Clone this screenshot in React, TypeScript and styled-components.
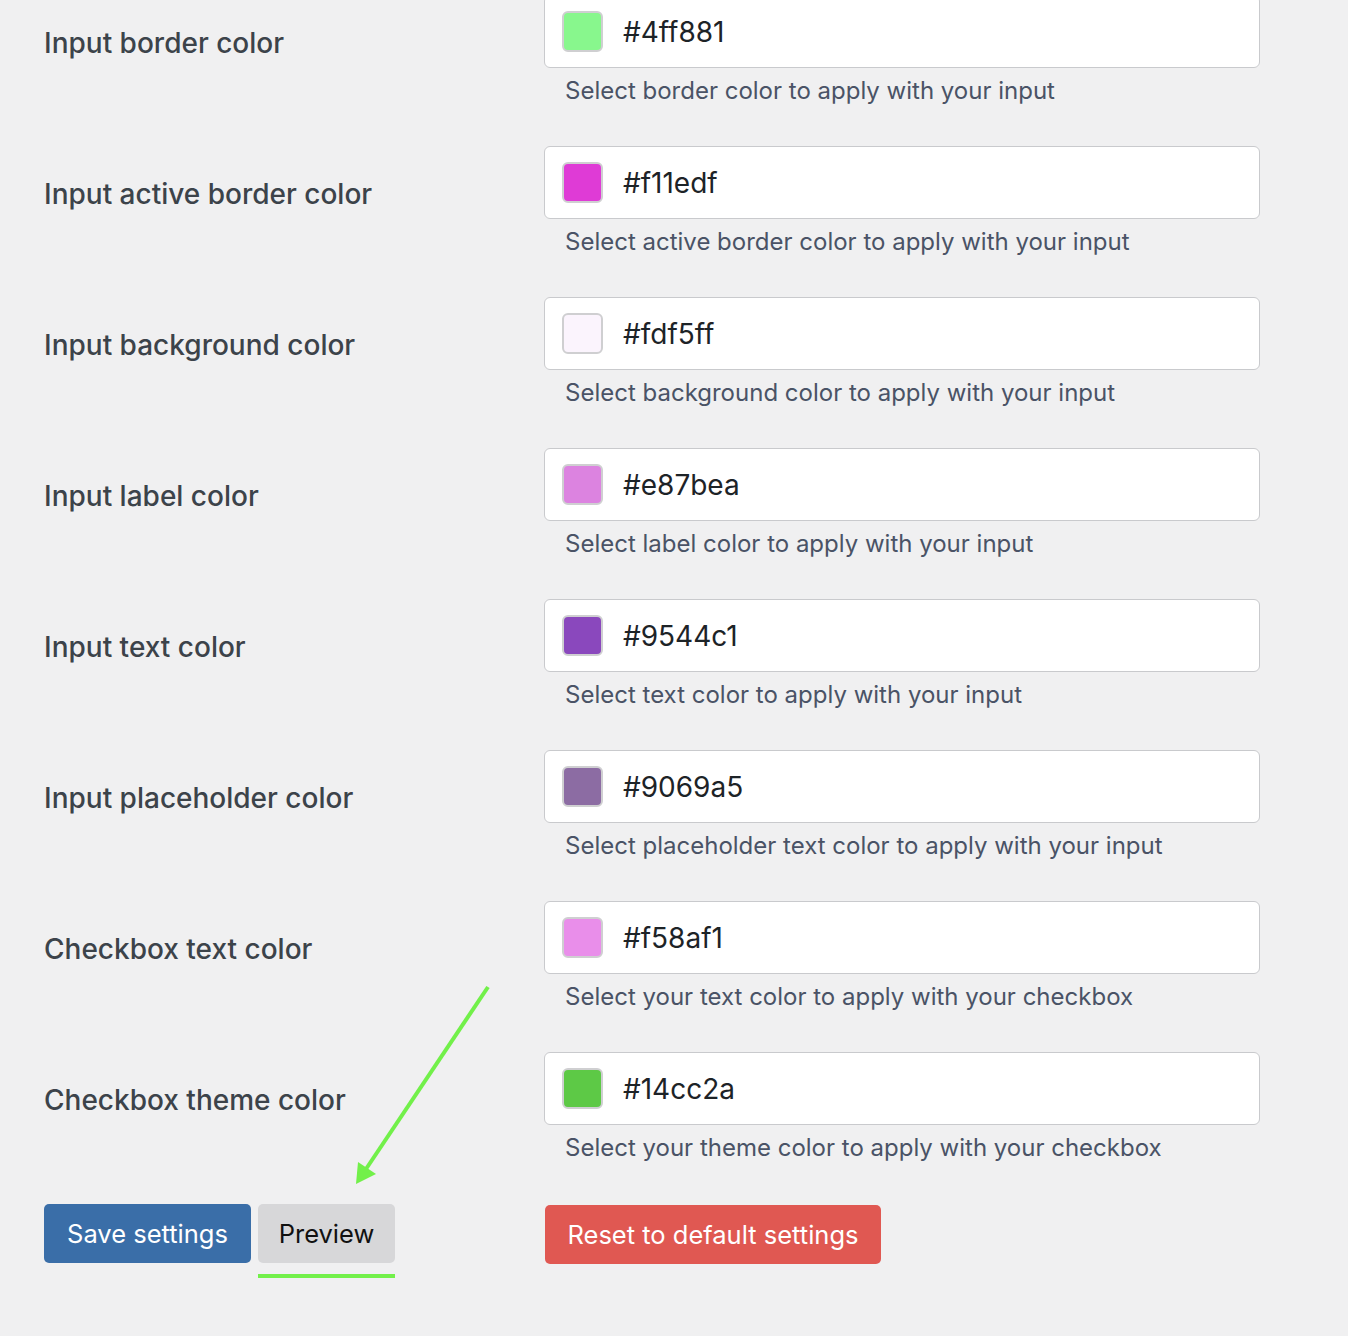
import React from "react";
import styled, { createGlobalStyle } from "styled-components";

const Global = createGlobalStyle`
  html, body { margin: 0; padding: 0; background: #f0f0f1; }
  body { font-family: Inter, "Noto Sans", "Liberation Sans", sans-serif; overflow: hidden; }
`;

const Page = styled.div`
  position: relative;
  padding: 0 0 0 44px;
  margin-top: -5px;
  width: 1304px;
  height: 1341px;
`;

const Rows = styled.div`
  display: flex;
  flex-direction: column;
  gap: 40px;
`;

const Row = styled.div`
  display: grid;
  grid-template-columns: 500px 716px;
`;

const Label = styled.div`
  padding-top: 30px;
  font-size: 28px;
  line-height: 36px;
  font-weight: 500;
  color: #3c434a;
`;

const Field = styled.div`
  display: flex;
  flex-direction: column;
`;

const ColorBox = styled.div`
  box-sizing: border-box;
  height: 73px;
  background: #fff;
  border: 1px solid #c9cacd;
  border-radius: 6px;
  display: flex;
  align-items: center;
  padding-left: 17px;
  gap: 20px;
`;

const Swatch = styled.span<{ $color: string }>`
  box-sizing: border-box;
  width: 41px;
  height: 41px;
  border-radius: 6px;
  border: 2px solid #cfcfd1;
  background: ${(p) => p.$color};
`;

const Hex = styled.span`
  font-size: 28px;
  color: #1d2327;
  line-height: 36px;
`;

const Description = styled.div`
  margin-top: 8px;
  padding-left: 21px;
  font-size: 24px;
  line-height: 30px;
  color: #4a5366;
`;

const Actions = styled.div`
  display: grid;
  grid-template-columns: 500px auto;
  margin-top: 41px;
`;

const Left = styled.div`
  display: flex;
  gap: 7px;
  align-items: flex-start;
`;

type Variant = "primary" | "secondary" | "danger";

const widths: Record<Variant, number> = { primary: 207, secondary: 137, danger: 336 };
const bgs: Record<Variant, string> = { primary: "#3a6ea8", secondary: "#d7d7d9", danger: "#e05852" };

const Button = styled.button<{ $variant: Variant }>`
  box-sizing: border-box;
  width: ${(p) => widths[p.$variant]}px;
  height: 59px;
  border: none;
  border-radius: 5px;
  padding: 0;
  text-align: center;
  white-space: nowrap;
  font-family: Inter, "Noto Sans", "Liberation Sans", sans-serif;
  font-size: 25.5px;
  font-weight: 400;
  cursor: pointer;
  background: ${(p) => bgs[p.$variant]};
  color: ${(p) => (p.$variant === "secondary" ? "#111" : "#fff")};
`;

const PreviewWrap = styled.div`
  position: relative;
`;

const Underline = styled.div`
  position: absolute;
  left: 0;
  right: 0;
  top: 70px;
  height: 4px;
  background: #72f04a;
`;

const DangerCell = styled.div`
  padding-left: 1px;
  padding-top: 1px;
`;

const Arrow = styled.svg`
  position: absolute;
  left: 0;
  top: 0;
  pointer-events: none;
`;

const rows = [
  { label: "Input border color", hex: "#4ff881", color: "#88f78d", desc: "Select border color to apply with your input" },
  { label: "Input active border color", hex: "#f11edf", color: "#df3bd6", desc: "Select active border color to apply with your input" },
  { label: "Input background color", hex: "#fdf5ff", color: "#fbf4fd", desc: "Select background color to apply with your input" },
  { label: "Input label color", hex: "#e87bea", color: "#dc83e0", desc: "Select label color to apply with your input" },
  { label: "Input text color", hex: "#9544c1", color: "#8a48bd", desc: "Select text color to apply with your input" },
  { label: "Input placeholder color", hex: "#9069a5", color: "#8c6ca3", desc: "Select placeholder text color to apply with your input" },
  { label: "Checkbox text color", hex: "#f58af1", color: "#e98eea", desc: "Select your text color to apply with your checkbox" },
  { label: "Checkbox theme color", hex: "#14cc2a", color: "#5dc946", desc: "Select your theme color to apply with your checkbox" },
];

export default function App() {
  return (
    <>
      <Global />
      <Page>
        <Rows>
          {rows.map((r) => (
            <Row key={r.label}>
              <Label>{r.label}</Label>
              <Field>
                <ColorBox>
                  <Swatch $color={r.color} />
                  <Hex>{r.hex}</Hex>
                </ColorBox>
                <Description>{r.desc}</Description>
              </Field>
            </Row>
          ))}
        </Rows>
        <Actions>
          <Left>
            <Button $variant="primary">Save settings</Button>
            <PreviewWrap>
              <Button $variant="secondary">Preview</Button>
              <Underline />
            </PreviewWrap>
          </Left>
          <DangerCell>
            <Button $variant="danger">Reset to default settings</Button>
          </DangerCell>
        </Actions>
        <Arrow width="1348" height="1341" viewBox="0 -5 1348 1341">
          <line x1="488" y1="987" x2="364" y2="1172" stroke="#72f04a" strokeWidth="4" />
          <polygon points="356,1184 358,1162 376,1174" fill="#72f04a" />
        </Arrow>
      </Page>
    </>
  );
}
